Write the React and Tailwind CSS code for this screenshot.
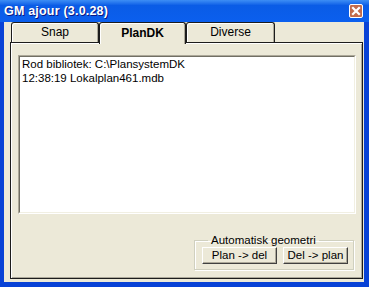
import React from 'react';

const Tab = ({ label, active, className }) => (
    <div
        className={`${className} flex items-center justify-center rounded-t-[3px] border border-b-0 border-[#1c1c1c] bg-[#ece9d8] ${
            active
                ? 'relative z-10 h-[22px] -mb-[2px] font-bold shadow-[inset_1px_1px_0_#fff,inset_-1px_0_0_#aca899]'
                : 'h-[20px] shadow-[inset_1px_1px_0_#fff,inset_-1px_0_0_#aca899]'
        }`}
    >
        <span className="text-[12px] leading-none pb-[1px]">{label}</span>
    </div>
);

const Button = ({ children, className }) => (
    <button
        className={`${className} h-[17px] flex items-center justify-center bg-[#ece9d8] border border-t-white border-l-white border-r-[#404040] border-b-[#404040] shadow-[inset_-1px_-1px_0_#aca899] text-[11.5px] leading-none text-black`}
    >
        {children}
    </button>
);

const App = () => {
    return (
        <div className="w-[369px] h-[287px] flex flex-col bg-[#0842d6] font-['Tahoma','Liberation_Sans',sans-serif] text-black select-none">
            {/* Title bar */}
            <div className="h-[22px] flex items-center justify-between pl-[4px] pr-[6px] bg-linear-to-b from-[#3d8ef5] via-[#0a5ce6] via-[25%] to-[#0b5fee]">
                <span className="text-white font-bold text-[12.5px] tracking-[0.2px] leading-none [text-shadow:1px_1px_0_#0a1883]">
                    GM ajour (3.0.28)
                </span>
                <div className="w-[14px] h-[14px] rounded-[2px] border border-white bg-[#c26b4b] flex items-center justify-center">
                    <svg width="10" height="10" viewBox="0 0 10 10">
                        <path d="M2 2 L8 8 M8 2 L2 8" stroke="#fff" strokeWidth="2.2" strokeLinecap="square" />
                    </svg>
                </div>
            </div>

            {/* Window body */}
            <div className="flex-1 flex flex-col ml-[4px] mr-[5px] mb-[5px] bg-[#ece9d8] pl-[6px] pr-[1px] pb-[3px]">
                {/* Tab row */}
                <div className="h-[20px] flex items-end pl-[1px]">
                    <Tab label="Snap" className="w-[88px]" />
                    <Tab label="PlanDK" active className="w-[87px]" />
                    <Tab label="Diverse" className="w-[89px]" />
                </div>

                {/* Tab page */}
                <div className="flex-1 flex flex-col border border-[#1c1c1c] shadow-[inset_1px_1px_0_#fff,inset_-1px_-1px_0_#aca899]">
                    <div className="mt-[12px] ml-[7px] mr-[6px] h-[159px] border border-t-[#aca899] border-l-[#aca899] border-r-white border-b-white">
                        <div className="h-full bg-white border border-t-[#716f64] border-l-[#716f64] border-r-[#f1efe2] border-b-[#f1efe2] pl-[2px] text-[11.5px] leading-[14px]">
                            <div>Rod bibliotek: C:\PlansystemDK</div>
                            <div>12:38:19 Lokalplan461.mdb</div>
                        </div>
                    </div>

                    <div className="flex-1 flex justify-end items-end pr-[8px] pb-[8px]">
                        <fieldset className="w-[159px] border border-[#d0d0bf] shadow-[inset_1px_1px_0_#fff,1px_1px_0_#fff] pl-[7px] pr-[5px] pb-[5px] flex gap-[6px]">
                            <legend className="ml-[6px] px-[3px] text-[11.5px] leading-[13px]">Automatisk geometri</legend>
                            <Button className="w-[75px]">Plan -&gt; del</Button>
                            <Button className="w-[65px]">Del -&gt; plan</Button>
                        </fieldset>
                    </div>
                </div>
            </div>
        </div>
    );
};

export default App;
